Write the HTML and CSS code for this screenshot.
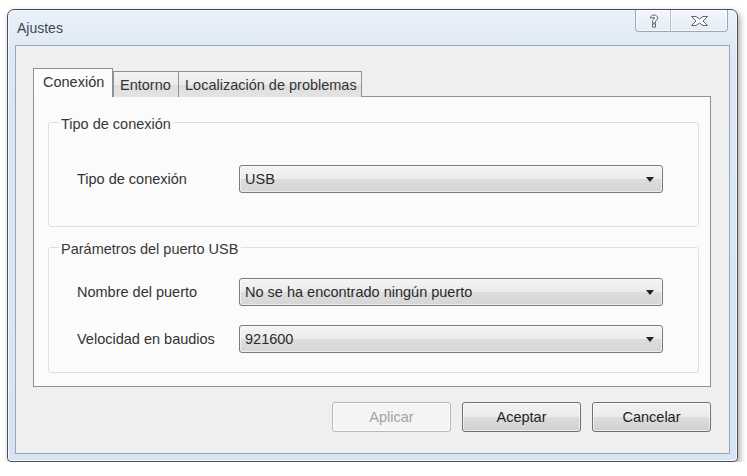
FILE: index.html
```html
<!DOCTYPE html>
<html lang="es">
<head>
<meta charset="utf-8">
<title>Ajustes</title>
<link rel="stylesheet" href="styles.css">
</head>
<body>
<div class="window">
  <div class="titlebar">
    <span class="title">Ajustes</span>
    <div class="caption-buttons">
      <div class="cap-btn cap-help">
        <svg width="10" height="15" viewBox="0 0 10 15">
          <path d="M1.5 5 C1.5 1 8.5 1 8.5 5 C8.5 7 6.5 7.5 6.5 9 L6.5 10 L3.5 10 L3.5 8.5 C3.5 6.7 5.5 6.3 5.5 5 C5.5 3.8 4.5 3.8 4.5 5 Z" fill="#fff" stroke="#5d6570" stroke-width="1"/>
          <rect x="3.5" y="11" width="3" height="3" fill="#fff" stroke="#5d6570" stroke-width="1"/>
        </svg>
      </div>
      <div class="cap-btn cap-close">
        <svg width="17" height="10" viewBox="0 0 17 10">
          <path d="M0.5 0.5 H5 L8.5 3 L12 0.5 H16.5 L12 5 L16.5 9.5 H12 L8.5 7 L5 9.5 H0.5 L5 5 Z" fill="#fff" stroke="#5d6570" stroke-width="1"/>
        </svg>
      </div>
    </div>
  </div>
  <div class="client">
    <div class="tabs">
      <div class="tab active">Conexión</div>
      <div class="tab">Entorno</div>
      <div class="tab">Localización de problemas</div>
    </div>
    <div class="panel">
      <div class="group group-type">
        <span class="group-title">Tipo de conexión</span>
        <div class="row">
          <span class="label">Tipo de conexión</span>
          <div class="combo"><span>USB</span><i class="arrow"></i></div>
        </div>
      </div>
      <div class="group group-port">
        <span class="group-title">Parámetros del puerto USB</span>
        <div class="row">
          <span class="label">Nombre del puerto</span>
          <div class="combo"><span>No se ha encontrado ningún puerto</span><i class="arrow"></i></div>
        </div>
        <div class="row">
          <span class="label">Velocidad en baudios</span>
          <div class="combo"><span>921600</span><i class="arrow"></i></div>
        </div>
      </div>
    </div>
    <div class="buttons">
      <div class="btn disabled">Aplicar</div>
      <div class="btn">Aceptar</div>
      <div class="btn">Cancelar</div>
    </div>
  </div>
</div>
</body>
</html>
```

FILE: styles.css
```css
* { box-sizing: border-box; }

html, body {
  margin: 0;
  padding: 0;
  background: #ffffff;
}

body {
  font-family: "Liberation Sans", Arial, sans-serif;
  font-size: 14.5px;
  color: #2e2e2e;
}

/* dialog frame */
.window {
  margin: 9px 0 0 7px;
  width: 731px;
  height: 453px;
  border: 1px solid #4b4f55;
  border-radius: 7px 7px 4px 4px;
  background: linear-gradient(180deg, #e9f1fa 0%, #dbe7f4 12%, #d6e4f3 100%);
  padding: 0 7px 7px 7px;
  box-shadow: 2px 3px 6px rgba(0,0,0,0.35), inset 0 0 0 1px #f4f8fc;
  display: flex;
  flex-direction: column;
}

.titlebar {
  height: 35px;
  display: flex;
  align-items: flex-start;
  flex-shrink: 0;
}

.title {
  margin: 10px 0 0 2px;
  color: #404850;
  font-size: 14px;
}

.caption-buttons {
  margin-left: auto;
  margin-right: 2px;
  display: flex;
}

.cap-btn {
  height: 22px;
  border: 1px solid #9da6b1;
  border-top: none;
  background: linear-gradient(180deg, #f3f6fa 0%, #e6edf5 100%);
  display: flex;
  align-items: center;
  justify-content: center;
  box-shadow: inset 0 0 0 1px rgba(255,255,255,0.6);
}

.cap-help {
  width: 35px;
  border-radius: 0 0 0 4px;
  border-right: none;
  padding-left: 2px;
}

.cap-close {
  width: 58px;
  border-left: 1px solid #b4bcc6;
  border-radius: 0 0 4px 0;
}

.client {
  flex: 1;
  border: 1px solid #9aa6b4;
  background: #efefef;
  padding: 22px 18px 0 17px;
  display: flex;
  flex-direction: column;
}

/* tab strip */
.tabs {
  display: flex;
  align-items: flex-end;
  height: 29px;
  position: relative;
  z-index: 1;
  margin-bottom: -1px;
}

.tab {
  height: 26px;
  padding: 0 6px;
  border: 1px solid #8e9196;
  border-bottom: none;
  background: linear-gradient(180deg, #f3f3f3 0%, #ebebeb 50%, #dedede 51%, #e3e3e3 100%);
  display: flex;
  align-items: center;
  margin-left: -1px;
  color: #333;
  white-space: nowrap;
}

.tab:first-child { margin-left: 0; }

.tab.active {
  height: 29px;
  padding: 0 6px 2px 9px;
  background: #fcfcfc;
  border-color: #8e9196;
  width: 80px;
  z-index: 2;
}

.tabs .tab:nth-child(2) { width: 66px; margin-left: 0; }
.tabs .tab:nth-child(3) { width: 184px; }

.panel {
  height: 291px;
  border: 1px solid #8e9196;
  background: #fbfbfb;
  padding: 25px 11px 0 14px;
  display: flex;
  flex-direction: column;
}

/* group boxes */
.group {
  border: 1px solid #dcdfe3;
  border-radius: 3px;
  box-shadow: inset 1px 1px 0 #ffffff;
  padding: 0 0 0 28px;
  display: flex;
  flex-direction: column;
}

.group-type {
  height: 105px;
}

.group-port {
  height: 126px;
  margin-top: 20px;
}

.group-title {
  align-self: flex-start;
  margin: -7px 0 0 -18px;
  padding: 0 3px 0 2px;
  background: #fbfbfb;
  line-height: 16px;
  color: #383838;
}

.group-type .row { margin-top: 33px; }
.group-port .row { margin-top: 21px; }
.group-port .row + .row { margin-top: 19px; }

.row {
  display: flex;
  align-items: center;
}

.label {
  width: 162px;
  color: #333;
}

.combo {
  width: 424px;
  height: 28px;
  border: 1px solid #7b7b7b;
  border-radius: 3px;
  background: linear-gradient(180deg, #f4f4f4 0%, #ececec 48%, #dddddd 52%, #d6d6d6 100%);
  box-shadow: inset 0 0 0 1px rgba(255,255,255,0.55);
  display: flex;
  align-items: center;
  padding: 0 0 0 5px;
  color: #2a2a2a;
}

.combo span { flex: 1; }

.arrow {
  width: 0;
  height: 0;
  border-left: 4px solid transparent;
  border-right: 4px solid transparent;
  border-top: 5px solid #222;
  margin-right: 8px;
}

/* dialog buttons */
.buttons {
  display: flex;
  justify-content: flex-end;
  gap: 11px;
  margin-top: 15px;
}

.btn {
  width: 119px;
  height: 30px;
  border: 1px solid #707070;
  border-radius: 3px;
  background: linear-gradient(180deg, #f2f2f2 0%, #ebebeb 48%, #dddddd 52%, #cfcfcf 100%);
  box-shadow: inset 0 0 0 1px rgba(255,255,255,0.6);
  display: flex;
  align-items: center;
  justify-content: center;
  color: #222;
}

.btn.disabled {
  border-color: #b5b9bd;
  background: #f4f4f4;
  color: #a3a3a3;
}
```
